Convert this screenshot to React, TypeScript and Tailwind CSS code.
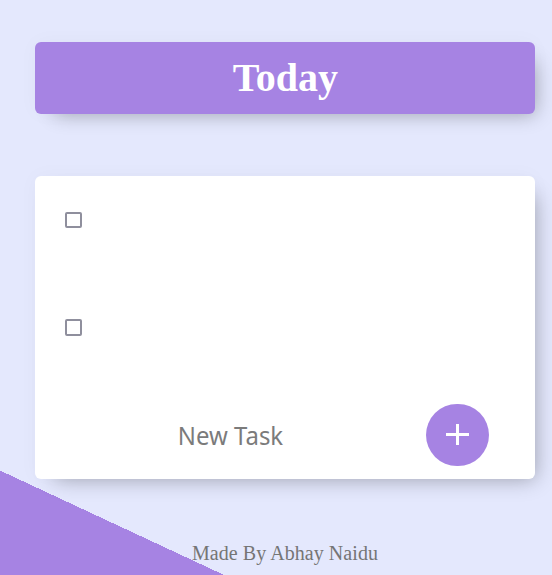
export default function App() {
  return (
    <main className="flex h-[575px] w-[552px] flex-col overflow-hidden bg-[#e4e8fd] bg-[linear-gradient(25deg,#a683e3_94.7px,#e4e8fd_94.7px)] pl-[35px] pt-[42px] font-['Liberation_Serif',serif]">
      <header className="flex h-[72px] w-[500px] shrink-0 items-center justify-center rounded-[6px] bg-[#a683e3] shadow-[10px_10px_20px_-10px_rgba(0,0,0,0.3),0_0_20px_rgba(0,0,0,0.03)]">
        <h1 className="pl-px text-[40px] leading-[46px] font-bold text-white">Today</h1>
      </header>
      <section className="mt-[62px] flex h-[303px] w-[500px] shrink-0 flex-col rounded-[6px] bg-white shadow-[10px_10px_20px_-10px_rgba(0,0,0,0.3),0_0_20px_rgba(0,0,0,0.03)]">
        <div className="h-[108px] pl-[30px] pt-[36px]">
          <input type="checkbox" aria-label="First task" className="block h-[16px] w-[17px] appearance-none rounded-[2px] border-2 border-[#8f8f9d]" />
        </div>
        <div className="h-[108px] pl-[30px] pt-[35px]">
          <input type="checkbox" aria-label="Second task" className="block size-[17px] appearance-none rounded-[2px] border-2 border-[#8f8f9d]" />
        </div>
        <form className="flex pl-[47px] pt-[12px]" onSubmit={(e) => e.preventDefault()}>
          <input type="text" placeholder="New Task" className="h-[61px] w-[297px] scale-x-92 text-center font-['Noto_Sans',sans-serif] text-[26px] placeholder:text-[#7b7b7b] focus:outline-none" />
          <button aria-label="Add task" className="ml-[47px] flex h-[62px] w-[63px] items-center justify-center rounded-full bg-[#a683e3] pb-[2px]">
            <svg width="23" height="21" viewBox="0 0 23 21" stroke="white" strokeWidth="3" shapeRendering="crispEdges"><path d="M11.5 0v21M0 10.5h23" /></svg>
          </button>
        </form>
      </section>
      <footer className="mt-[63px] w-[500px] text-center text-[20px] leading-[23px] tracking-[0.06px] text-[#757575]">Made By Abhay Naidu</footer>
    </main>
  );
}
